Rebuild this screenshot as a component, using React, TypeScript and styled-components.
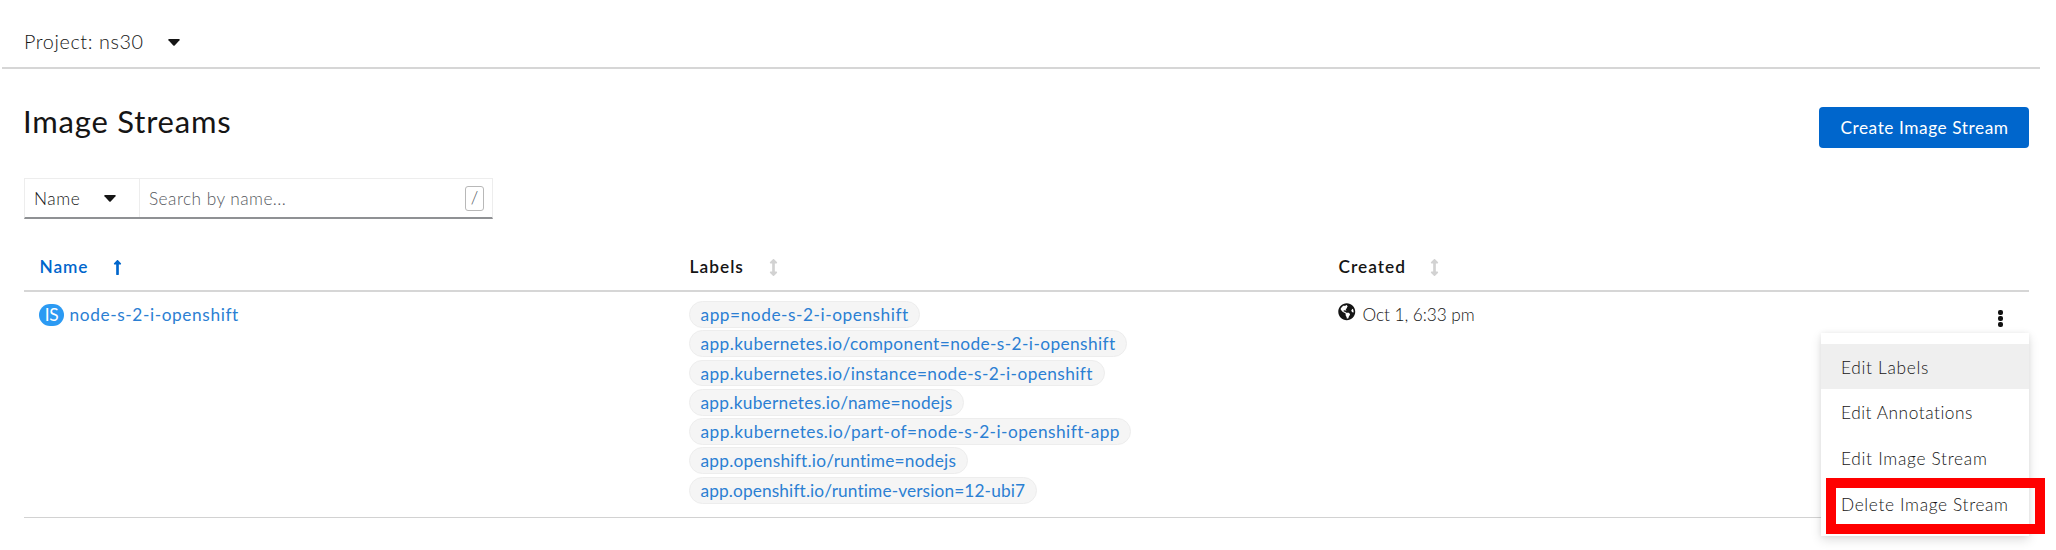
import React from 'react';
import styled, { createGlobalStyle } from 'styled-components';
import { FaLongArrowAltUp, FaArrowsAltV, FaGlobeAmericas } from 'react-icons/fa';

const GlobalStyle = createGlobalStyle`
  *, *::before, *::after { box-sizing: border-box; }
  body {
    margin: 0;
    background: #fff;
    color: #151515;
    font-family: Lato, "Liberation Sans", sans-serif;
    font-size: 17.3px;
    line-height: 26px;
    white-space: nowrap;
    overflow: hidden;
    font-variant-ligatures: none;
  }
  svg { display: block; flex: none; }
`;

const Tracked = styled.span<{ $track?: number }>`
  letter-spacing: ${(p) => p.$track ?? 0}px;
`;

const Page = styled.div`
  height: 550px;
  display: flex;
  flex-direction: column;
`;

const ProjectBar = styled.header`
  height: 69px;
  margin: 0 16px 0 2px;
  padding: 14px 0 0 22px;
  display: flex;
  align-items: center;
  gap: 24px;
  border-bottom: 2px solid #d6d6d6;
  font-size: 19.8px;
  font-weight: 300;
  svg { margin-top: 3px; }
`;

const TitleRow = styled.div`
  display: flex;
  justify-content: space-between;
  height: 109px;
  padding: 37.5px 27px 0 23px;
`;

const Title = styled.h1`
  margin: -4px 0 0;
  font-size: 31px;
  line-height: 36px;
  font-weight: 400;
`;

const PrimaryButton = styled.button`
  width: 210px;
  height: 41px;
  padding: 1px 0 0 1px;
  border: 0;
  border-radius: 4px;
  background: #06c;
  color: #fff;
  font: inherit;
`;

const Filter = styled.div`
  display: flex;
  width: 469px;
  height: 41px;
  margin-left: 24px;
  border: 1px solid #ededed;
  border-bottom: 2px solid #8f9194;
  font-weight: 300;
`;

const FilterSelect = styled.div`
  display: flex;
  align-items: center;
  justify-content: space-between;
  width: 115px;
  padding: 1px 23px 0 9px;
  border-right: 1px solid #ededed;
`;

const SearchField = styled.div`
  flex: 1;
  display: flex;
  align-items: center;
  justify-content: space-between;
  padding: 1px 8px 0 9px;
  color: #55595e;
`;

const KeyHint = styled.kbd`
  width: 19px;
  height: 25px;
  border: 1px solid #b8b8b8;
  border-radius: 3px;
  font: inherit;
  line-height: 22px;
  text-align: center;
`;

const Grid = styled.div`
  display: grid;
  grid-template-columns: 650px 649px 1fr;
  margin: 0 27px 0 24px;
  padding-left: 15px;
`;

const HeadRow = styled(Grid)`
  height: 73px;
  padding-top: 34px;
  border-bottom: 2px solid #d6d6d6;
  font-weight: 600;
`;

const HeadCell = styled.div<{ $active?: boolean; $gap: number }>`
  display: flex;
  align-items: center;
  gap: ${(p) => p.$gap}px;
  height: 28px;
  padding-left: 0.6px;
  color: ${(p) => (p.$active ? '#06c' : '#151515')};
  svg { color: ${(p) => (p.$active ? '#06c' : '#d2d2d2')}; }
`;

const BodyRow = styled(Grid)`
  height: 226px;
  padding-top: 9px;
  border-bottom: 1px solid #d2d2d2;
`;

const NameCell = styled.div`
  display: flex;
  align-items: center;
  gap: 5.5px;
  height: 27px;
  color: #2b7fd3;
`;

const KindBadge = styled.span`
  width: 25px;
  height: 22px;
  border-radius: 11px;
  background: #2b9af3;
  color: #fff;
  line-height: 22px;
  letter-spacing: -0.3px;
  text-align: center;
`;

const LabelList = styled.div`
  display: flex;
  flex-direction: column;
  align-items: flex-start;
  gap: 2.5px;
`;

const Label = styled.a<{ $width: number }>`
  width: ${(p) => p.$width}px;
  height: 26.8px;
  padding-left: 10.5px;
  border: 1px solid #ededed;
  border-radius: 14px;
  background: #f5f5f5;
  color: #2b7fd3;
  line-height: 25px;
`;

const CreatedCell = styled.div`
  display: flex;
  justify-content: space-between;
  height: 27px;
  font-weight: 300;
`;

const Timestamp = styled.div`
  display: flex;
  align-items: center;
  gap: 7px;
  svg { margin-bottom: 5px; }
`;

const MenuAnchor = styled.div`
  position: relative;
  width: 208px;
`;

const Kebab = styled.div`
  display: flex;
  flex-direction: column;
  align-items: center;
  gap: 1.2px;
  width: 5px;
  margin: 8.5px 0 0 177px;
`;

const Dot = styled.i`
  width: 5px;
  height: 5px;
  border-radius: 2px;
  background: #111;
`;

const Menu = styled.div`
  position: absolute;
  top: 32px;
  left: 0;
  width: 208px;
  height: 203px;
  padding-top: 10.5px;
  background: #fff;
  box-shadow: 0 4px 10px rgba(3, 3, 3, 0.13), 0 0 5px rgba(3, 3, 3, 0.06);
`;

const MenuItem = styled.div<{ $hover?: boolean }>`
  height: 45.8px;
  padding-left: 20px;
  line-height: 47px;
  background: ${(p) => (p.$hover ? '#efefef' : 'transparent')};
`;

const Highlight = styled.div`
  position: absolute;
  left: 5px;
  top: 145px;
  width: 219px;
  height: 56px;
  border: 10px solid #f00;
`;

const labels: { text: string; width: number; track: number }[] = [
  { text: 'app=node-s-2-i-openshift', width: 231, track: 0.54 },
  { text: 'app.kubernetes.io/component=node-s-2-i-openshift', width: 438, track: 0.41 },
  { text: 'app.kubernetes.io/instance=node-s-2-i-openshift', width: 415.5, track: 0.41 },
  { text: 'app.kubernetes.io/name=nodejs', width: 275, track: 0.28 },
  { text: 'app.kubernetes.io/part-of=node-s-2-i-openshift-app', width: 442, track: 0.45 },
  { text: 'app.openshift.io/runtime=nodejs', width: 279, track: 0.24 },
  { text: 'app.openshift.io/runtime-version=12-ubi7', width: 348, track: 0.12 },
];

const actions: { text: string; track: number; hover?: boolean }[] = [
  { text: 'Edit Labels', track: 0.7, hover: true },
  { text: 'Edit Annotations', track: 0.55 },
  { text: 'Edit Image Stream', track: 0.72 },
  { text: 'Delete Image Stream', track: 0.66 },
];

const Caret = () => (
  <svg width="12" height="7" viewBox="0 0 12 7">
    <path d="M1 0h10q1.200.200.500 1.200L6.700 6.500q-.700.700-1.400 0L.500 1.200Q-.200.200 1 0z" fill="#151515" />
  </svg>
);

export default function App() {
  return (
    <Page>
      <GlobalStyle />
      <ProjectBar>
        <Tracked $track={0.6}>Project: ns30</Tracked>
        <Caret />
      </ProjectBar>
      <TitleRow>
        <Title><Tracked $track={0.8}>Image Streams</Tracked></Title>
        <PrimaryButton><Tracked $track={0.55}>Create Image Stream</Tracked></PrimaryButton>
      </TitleRow>
      <Filter>
        <FilterSelect>
          <Tracked $track={0.6}>Name</Tracked>
          <Caret />
        </FilterSelect>
        <SearchField>
          <Tracked $track={0.45}>Search by name...</Tracked>
          <KeyHint>/</KeyHint>
        </SearchField>
      </Filter>
      <HeadRow>
        <HeadCell $active $gap={20.5}><Tracked $track={0.9}>Name</Tracked><FaLongArrowAltUp size={17} /></HeadCell>
        <HeadCell $gap={21}><Tracked $track={1}>Labels</Tracked><FaArrowsAltV size={17} /></HeadCell>
        <HeadCell $gap={20}><Tracked $track={1}>Created</Tracked><FaArrowsAltV size={17} /></HeadCell>
      </HeadRow>
      <BodyRow>
        <NameCell>
          <KindBadge>IS</KindBadge>
          <Tracked $track={0.6}>node-s-2-i-openshift</Tracked>
        </NameCell>
        <LabelList>
          {labels.map((l) => (
            <Label key={l.text} $width={l.width}><Tracked $track={l.track}>{l.text}</Tracked></Label>
          ))}
        </LabelList>
        <CreatedCell>
          <Timestamp>
            <FaGlobeAmericas size={17.5} />
            <Tracked $track={-0.08}>Oct 1, 6:33 pm</Tracked>
          </Timestamp>
          <MenuAnchor>
            <Kebab><Dot /><Dot /><Dot /></Kebab>
            <Menu>
              {actions.map((a) => (
                <MenuItem key={a.text} $hover={a.hover}><Tracked $track={a.track}>{a.text}</Tracked></MenuItem>
              ))}
              <Highlight />
            </Menu>
          </MenuAnchor>
        </CreatedCell>
      </BodyRow>
    </Page>
  );
}
